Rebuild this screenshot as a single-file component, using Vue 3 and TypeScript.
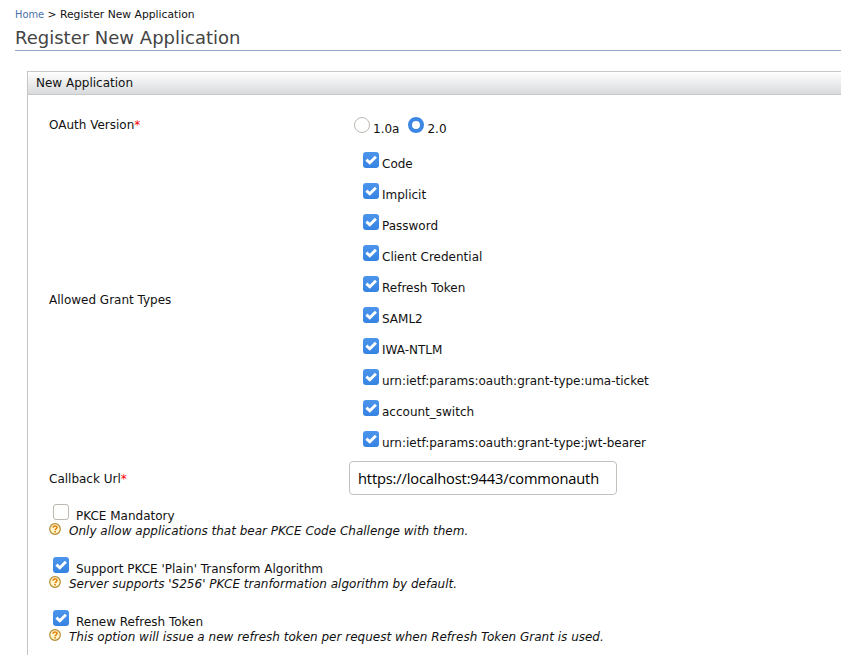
<script setup lang="ts">
import { ref } from 'vue'

interface Option {
  label: string
  checked: boolean
}

interface HelpOption extends Option {
  help: string
}

const version = ref<string>('2.0')
const versions: string[] = ['1.0a', '2.0']

const grants = ref<Option[]>([
  'Code',
  'Implicit',
  'Password',
  'Client Credential',
  'Refresh Token',
  'SAML2',
  'IWA-NTLM',
  'urn:ietf:params:oauth:grant-type:uma-ticket',
  'account_switch',
  'urn:ietf:params:oauth:grant-type:jwt-bearer',
].map((label) => ({ label, checked: true })))

const callbackUrl = ref('https://localhost:9443/commonauth')

const settings = ref<HelpOption[]>([
  { label: 'PKCE Mandatory', checked: false, help: 'Only allow applications that bear PKCE Code Challenge with them.' },
  { label: "Support PKCE 'Plain' Transform Algorithm", checked: true, help: "Server supports 'S256' PKCE tranformation algorithm by default." },
  { label: 'Renew Refresh Token', checked: true, help: 'This option will issue a new refresh token per request when Refresh Token Grant is used.' },
])
</script>

<template>
  <main class="page">
    <nav class="crumbs"><a class="home">Home</a> &gt; Register New Application</nav>
    <h1 class="title">Register New Application</h1>
    <section class="panel">
      <h2 class="panel-head">New Application</h2>
      <div class="row version-row">
        <span class="name">OAuth Version<b class="req">*</b></span>
        <div class="radios">
          <label v-for="v in versions" :key="v" class="radio" @click="version = v">
            <span class="dot" :class="{ on: version === v }"></span><span class="opt">{{ v }}</span>
          </label>
        </div>
      </div>
      <div class="row grant-row">
        <span class="name">Allowed Grant Types</span>
        <div class="grants">
          <label v-for="g in grants" :key="g.label" class="check" @click="g.checked = !g.checked">
            <span class="box" :class="{ on: g.checked }">
              <svg v-if="g.checked" viewBox="0 0 16 16"><path d="M3.4 7.6 6.8 10.8 12.9 4.8" /></svg>
            </span>
            <span class="opt">{{ g.label }}</span>
          </label>
        </div>
      </div>
      <div class="row url-row">
        <span class="name">Callback Url<b class="req">*</b></span>
        <input v-model="callbackUrl" class="url" type="text" spellcheck="false" />
      </div>
      <div v-for="s in settings" :key="s.label" class="setting">
        <label class="check wide" @click="s.checked = !s.checked">
          <span class="box" :class="{ on: s.checked }">
            <svg v-if="s.checked" viewBox="0 0 16 16"><path d="M3.4 7.6 6.8 10.8 12.9 4.8" /></svg>
          </span>
          <span class="opt">{{ s.label }}</span>
        </label>
        <div class="help">
          <svg class="q" viewBox="0 0 12 12">
            <circle cx="6" cy="6" r="5.3" />
            <path d="M4.1 4.8C4.1 2.4 8 2.4 8 4.6 8 5.8 6.1 5.9 6.1 7.2M6.1 8.1V9.5" />
          </svg>
          <em>{{ s.help }}</em>
        </div>
      </div>
    </section>
  </main>
</template>

<style>
body {
  margin: 0;
  background: #fff;
  overflow: hidden;
}
</style>

<style scoped>
.page {
  box-sizing: border-box;
  height: 655px;
  padding: 7px 0 0 15px;
  overflow: hidden;
  color: #111;
  font: 12px/16px "DejaVu Sans", sans-serif;
}
.crumbs {
  height: 16px;
  font-size: 10.75px;
}
.home {
  color: #4a6fa8;
  font-size: 9.9px;
}
.title {
  margin: 3px 0 0;
  height: 24px;
  border-bottom: 1px solid #8fa8cc;
  font-size: 18px;
  font-weight: 400;
  line-height: 24px;
  color: #444;
}
.panel {
  margin: 20px 0 0 12px;
  border-left: 1px solid #c4c4c4;
  height: 600px;
}
.panel-head {
  margin: 0;
  box-sizing: border-box;
  height: 24px;
  padding: 3px 0 0 8px;
  border: solid #c8c8c8;
  border-width: 1px 0;
  background: linear-gradient(#fff, #d8dadb);
  font-size: 12px;
  font-weight: 400;
  line-height: 16px;
}
.row {
  display: flex;
  padding-left: 21px;
}
.name {
  width: 300px;
  flex: none;
}
.req {
  color: #f00;
  font-weight: 400;
}
.version-row {
  height: 52px;
  padding-top: 22px;
  box-sizing: border-box;
}
.radios {
  display: flex;
  gap: 9px;
  padding-left: 5px;
}
.radio {
  display: flex;
  gap: 3px;
}
.radio .opt {
  padding-top: 4px;
}
.dot {
  box-sizing: border-box;
  width: 16px;
  height: 16px;
  border: 1px solid #bdb7b1;
  border-radius: 50%;
  background: #fff;
}
.dot.on {
  border: 4px solid #3c86e4;
}
.grant-row {
  align-items: center;
  height: 306px;
}
.grants {
  display: flex;
  flex-direction: column;
  gap: 11px;
  padding: 2px 0 0 14px;
}
.check {
  display: flex;
  gap: 3px;
  height: 20px;
}
.check .opt {
  padding-top: 4px;
  white-space: nowrap;
}
.box {
  box-sizing: border-box;
  width: 16px;
  height: 16px;
  flex: none;
  border: 1px solid #bdb7b1;
  border-radius: 3px;
  background: #fff;
}
.box.on {
  border: 0;
  background: linear-gradient(#4c95ec, #3583e2);
}
.box svg {
  display: block;
  width: 16px;
  height: 16px;
}
.box path {
  fill: none;
  stroke: #fff;
  stroke-width: 2.9;
}
.url-row {
  align-items: center;
  height: 34px;
  margin-top: 8px;
}
.url-row .name {
  padding-top: 2px;
}
.url {
  box-sizing: border-box;
  width: 268px;
  height: 34px;
  padding: 0 8px;
  border: 1px solid #c4c0bb;
  border-radius: 4px;
  outline: none;
  background: #fff;
  color: #000;
  font: 500 14.67px "Open Sans", sans-serif;
  letter-spacing: -0.16px;
}
.setting {
  height: 44px;
  padding: 9px 0 0 21px;
}
.check.wide {
  gap: 7px;
  height: 19px;
  padding-left: 4px;
}
.help {
  display: flex;
  gap: 8px;
  height: 16px;
  white-space: nowrap;
}
.q {
  width: 12px;
  height: 12px;
  flex: none;
}
.q circle {
  fill: #fff8cf;
  stroke: #b58a2c;
  stroke-width: 1.2;
}
.q path {
  fill: none;
  stroke: #e5820c;
  stroke-width: 1.6;
}
</style>
